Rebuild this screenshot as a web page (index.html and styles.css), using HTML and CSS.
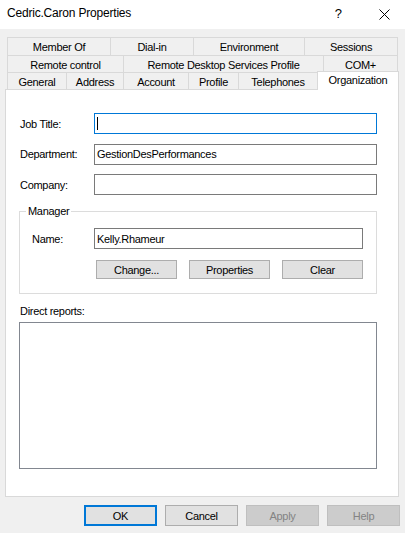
FILE: index.html
```html
<!DOCTYPE html>
<html>
<head>
<meta charset="utf-8">
<title>Cedric.Caron Properties</title>
<link rel="stylesheet" href="styles.css">
</head>
<body>
<div class="titlebar">
  <span class="title">Cedric.Caron Properties</span>
  <span class="help">?</span>
  <svg class="close" width="11" height="11" viewBox="0 0 11 11"><path d="M0.5 0.5 L10.5 10.5 M10.5 0.5 L0.5 10.5" stroke="#000" stroke-width="1" fill="none"/></svg>
</div>
<div class="main">
  <div class="tabs">
    <div class="tabrow r1">
      <div class="tab">Member Of</div>
      <div class="tab">Dial-in</div>
      <div class="tab">Environment</div>
      <div class="tab">Sessions</div>
    </div>
    <div class="tabrow r2">
      <div class="tab">Remote control</div>
      <div class="tab">Remote Desktop Services Profile</div>
      <div class="tab">COM+</div>
    </div>
    <div class="tabrow r3">
      <div class="tab">General</div>
      <div class="tab">Address</div>
      <div class="tab">Account</div>
      <div class="tab">Profile</div>
      <div class="tab">Telephones</div>
      <div class="tab sel">Organization</div>
    </div>
  </div>
  <div class="panel">
    <div class="fields">
      <label>Job Title:</label>
      <div class="input focus"><span class="caret"></span></div>
      <label>Department:</label>
      <div class="input">GestionDesPerformances</div>
      <label>Company:</label>
      <div class="input"></div>
    </div>
    <fieldset class="group">
      <legend>Manager</legend>
      <div class="name-row">
        <label>Name:</label>
        <div class="input">Kelly.Rhameur</div>
      </div>
      <div class="mgr-buttons">
        <button class="btn">Change...</button>
        <button class="btn">Properties</button>
        <button class="btn">Clear</button>
      </div>
    </fieldset>
    <div class="dr-label">Direct reports:</div>
    <div class="listbox"></div>
  </div>
  <div class="buttons">
    <button class="btn dlg default">OK</button>
    <button class="btn dlg">Cancel</button>
    <button class="btn dlg disabled">Apply</button>
    <button class="btn dlg disabled">Help</button>
  </div>
</div>
</body>
</html>
```
FILE: styles.css
```css
html, body {
  margin: 0;
  padding: 0;
}
body {
  width: 405px;
  height: 533px;
  overflow: hidden;
  background: #f0f0f0;
  font-family: "Liberation Sans", Arial, sans-serif;
  font-size: 11px;
  letter-spacing: -0.3px;
  color: #000;
}
.titlebar {
  height: 29px;
  background: #fff;
  display: flex;
  align-items: center;
  padding-left: 7px;
  padding-bottom: 3px;
  box-sizing: border-box;
}
.title {
  font-size: 12px;
  letter-spacing: -0.2px;
}
.help {
  margin-left: auto;
  font-size: 13px;
  letter-spacing: 0;
  margin-right: 37px;
}
.close {
  display: block;
  margin-right: 15px;
  margin-top: 2px;
}
.main {
  padding: 8px 6px 0 5px;
}
.tabs {
  margin-left: 2px;
}
.tabrow {
  display: grid;
}
.r1 {
  grid-template-columns: 103px 83px 111px 94px;
  height: 18px;
}
.r2 {
  grid-template-columns: 116px 200px 75px;
  height: 17px;
}
.r3 {
  grid-template-columns: 59px 57px 65px 50px 79px 82px;
  height: 17px;
}
.tab {
  border-top: 1px solid #d9d9d9;
  border-left: 1px solid #d9d9d9;
  display: flex;
  align-items: center;
  justify-content: center;
  box-sizing: border-box;
  white-space: nowrap;
  padding-top: 1px;
}
.tab:last-child {
  border-right: 1px solid #d9d9d9;
}
.tab.sel {
  background: #fff;
  margin-top: -1px;
  margin-bottom: -1px;
  padding-top: 0;
  padding-bottom: 2px;
  position: relative;
  z-index: 1;
}
.panel {
  border: 1px solid #d9d9d9;
  background: #fff;
  height: 408px;
  box-sizing: border-box;
  padding: 23px 0 0 14px;
}
.fields {
  display: grid;
  grid-template-columns: 74px 283px;
  grid-auto-rows: 21px;
  row-gap: 9.5px;
  align-items: center;
}
.input {
  height: 21px;
  box-sizing: border-box;
  border: 1px solid #7a7a7a;
  padding-left: 2px;
  display: flex;
  align-items: center;
  background: #fff;
}
.input.focus {
  border-color: #0078d7;
}
.caret {
  width: 1px;
  height: 13px;
  background: #000;
}
.group {
  margin: 10px 0 0 -1px;
  width: 358px;
  box-sizing: border-box;
  border: 1px solid #dcdcdc;
  padding: 11px 0 14px 0;
  min-inline-size: 0;
}
.group legend {
  margin-left: 6px;
  padding: 0 2px;
  line-height: 12px;
}
.name-row {
  display: grid;
  grid-template-columns: 62px 269px;
  align-items: center;
  padding-left: 12px;
}
.mgr-buttons {
  display: flex;
  justify-content: flex-end;
  gap: 12px;
  margin-top: 11px;
  padding-right: 13px;
}
.btn {
  font-family: inherit;
  font-size: 11px;
  letter-spacing: -0.3px;
  color: #000;
  background: #e1e1e1;
  border: 1px solid #adadad;
  height: 19px;
  width: 81px;
  padding: 0;
  margin: 0;
  box-sizing: border-box;
}
.dr-label {
  margin-top: 11px;
  line-height: 13px;
}
.listbox {
  margin: 4px 0 0 -1px;
  width: 358px;
  height: 147px;
  box-sizing: border-box;
  border: 1px solid #828790;
  background: #fff;
}
.buttons {
  display: flex;
  justify-content: flex-end;
  gap: 8px;
  margin-top: 8px;
  margin-right: -1px;
}
.btn.dlg {
  width: 73px;
  height: 21px;
}
.btn.default {
  border: 2px solid #0078d7;
}
.btn.disabled {
  background: #cccccc;
  border-color: #bfbfbf;
  color: #838383;
}
```
